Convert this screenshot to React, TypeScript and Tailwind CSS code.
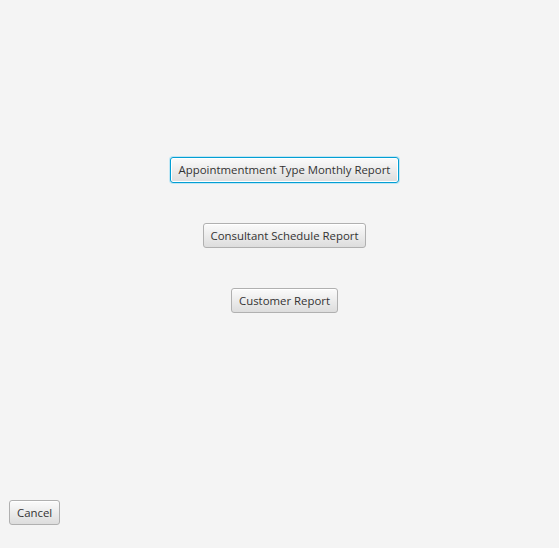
const btn =
  'h-[25px] px-[7px] rounded-[3px] border border-[#b0b0b0] bg-linear-to-b from-[#fbfbfb] to-[#dddddd] text-[11.4px] text-[#333333] leading-none shadow-[inset_0_1px_0_#ffffff]';

const App = () => {
  return (
    <div
      className="w-[559px] h-[548px] bg-[#f4f4f4] flex flex-col"
      style={{ fontFamily: '"Open Sans", "Noto Sans", sans-serif' }}
    >
      <div className="flex flex-col items-center gap-[40px] pt-[157px] pl-[10px]">
        <button className="h-[26px] px-[8px] rounded-[3px] border border-[#039ed3] bg-linear-to-b from-[#fbfbfb] to-[#dddddd] text-[11.4px] text-[#333333] leading-none shadow-[inset_0_0_0_1px_#ffffff,0_0_0_1px_#bfe6f4]">
          Appointmentment Type Monthly Report
        </button>
        <button className={btn}>Consultant Schedule Report</button>
        <button className={btn}>Customer Report</button>
      </div>
      <div className="mt-auto pl-[9px] pb-[23px]">
        <button className={btn}>Cancel</button>
      </div>
    </div>
  );
};

export default App;
